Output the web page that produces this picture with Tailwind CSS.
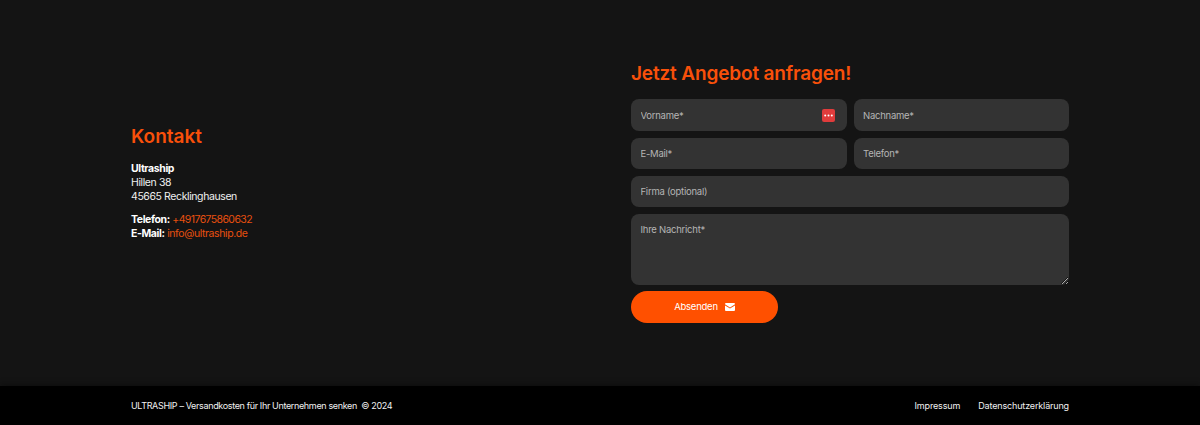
<!DOCTYPE html>
<html lang="de">
<head>
  <meta charset="UTF-8" />
  <meta name="viewport" content="width=device-width, initial-scale=1.0" />
  <title>Ultraship Kontakt</title>
  <script src="https://cdn.jsdelivr.net/npm/@tailwindcss/browser@4"></script>
</head>
<body class="bg-[#141414] text-white font-['Inter',sans-serif] h-[425px] overflow-hidden flex flex-col">

  <!-- Kontakt + Formular -->
  <main class="h-[386px] w-[938px] mx-auto flex">
    <section class="w-[500px] flex flex-col justify-center pb-[21px]">
      <h2 class="text-[19px] leading-[24px] font-semibold text-[#f9500a] mb-[13px]">Kontakt</h2>
      <p class="text-[10.5px] tracking-[-0.4px] leading-[14px] text-[#f0f0f0] mb-[9px]">
        <strong class="font-bold text-white">Ultraship</strong><br />
        Hillen 38<br />
        45665 Recklinghausen
      </p>
      <p class="text-[10.5px] tracking-[-0.4px] leading-[14px]">
        <strong class="font-bold text-white">Telefon:</strong> <a href="#" class="text-[#e8500f] tracking-[-0.6px]">+4917675860632</a><br />
        <strong class="font-bold text-white">E-Mail:</strong> <a href="#" class="text-[#e8500f]">info@ultraship.de</a>
      </p>
    </section>

    <section class="w-[438px] pt-[62px]">
      <h2 class="text-[19px] leading-[24px] font-semibold tracking-[-0.15px] text-[#f9500a] mb-[13px]">Jetzt Angebot anfragen!</h2>
      <form class="flex flex-col gap-[7px]">
        <div class="grid grid-cols-2 gap-[7px]">
          <div class="relative">
            <input placeholder="Vorname*" class="w-full h-[32px] px-[9.5px] rounded-[8px] bg-[#333333] text-[9.5px] tracking-[-0.25px] outline-none placeholder:text-[#b5b5b5]" />
            <span class="absolute right-[12px] top-[10px] w-[13px] h-[13px] rounded-[2px] bg-[#e03c3c] flex items-center justify-center">
              <svg width="9" height="3" viewBox="0 0 9 3" fill="#fff"><circle cx="1.2" cy="1.5" r="1" /><circle cx="4.500" cy="1.5" r="1" /><circle cx="7.8" cy="1.5" r="1" /></svg>
            </span>
          </div>
          <input placeholder="Nachname*" class="w-full h-[32px] px-[9.5px] rounded-[8px] bg-[#333333] text-[9.5px] tracking-[-0.25px] outline-none placeholder:text-[#b5b5b5]" />
        </div>
        <div class="grid grid-cols-2 gap-[7px]">
          <input placeholder="E-Mail*" class="w-full h-[31px] px-[9.5px] rounded-[8px] bg-[#333333] text-[9.5px] tracking-[-0.25px] outline-none placeholder:text-[#b5b5b5]" />
          <input placeholder="Telefon*" class="w-full h-[31px] px-[9.5px] rounded-[8px] bg-[#333333] text-[9.5px] tracking-[-0.25px] outline-none placeholder:text-[#b5b5b5]" />
        </div>
        <input placeholder="Firma (optional)" class="w-full h-[31px] px-[9.5px] rounded-[8px] bg-[#333333] text-[9.5px] tracking-[-0.25px] outline-none placeholder:text-[#b5b5b5]" />
        <textarea placeholder="Ihre Nachricht*" class="block w-full h-[71px] px-[9.5px] py-[10px] rounded-[8px] bg-[#333333] text-[9.5px] tracking-[-0.25px] leading-[12px] outline-none placeholder:text-[#b5b5b5]"></textarea>
        <button type="button" class="-mt-px w-[147px] h-[32px] rounded-full bg-[#ff5000] text-white text-[9.5px] tracking-[-0.25px] flex items-center justify-center gap-[6px]">
          Absenden
          <svg width="10" height="8" viewBox="0 0 10 8" class="ml-[1px]"><path fill="#fff" d="M0 1a1 1 0 0 1 1-1h8a1 1 0 0 1 1 1v.3L5 4.400 0 1.300V1zm0 1.500V7a1 1 0 0 0 1 1h8a1 1 0 0 0 1-1V2.500L5 5.600 0 2.500z" /></svg>
        </button>
      </form>
    </section>
  </main>

  <footer class="relative h-[39px] bg-black shadow-[0_-2px_6px_rgba(0,0,0,0.3)]">
    <div class="w-[938px] h-full mx-auto flex justify-between items-center text-[9px] text-[#f0f0f0]">
      <span class="tracking-[-0.35px]">ULTRASHIP – Versandkosten für Ihr Unternehmen senken &nbsp;© 2024</span>
      <nav class="flex gap-[18px] tracking-[-0.15px]">
        <a href="#">Impressum</a>
        <a href="#">Datenschutzerklärung</a>
      </nav>
    </div>
  </footer>

</body>
</html>
